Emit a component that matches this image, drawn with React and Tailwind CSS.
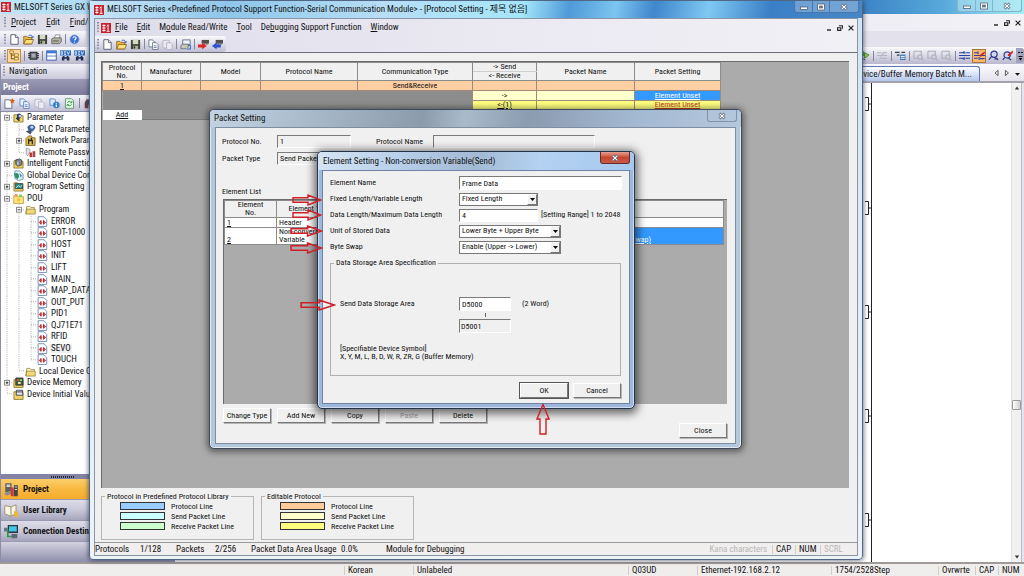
import React from "react";

/* ---------- icons ---------- */

const ICONS = {
  app: (
    <g>
      <rect width="12" height="12" fill="#c8202c" />
      <path d="M1.5 3h4M1.5 6h4M1.5 9h4M3.5 1.5v9M8.5 2v8M6.8 4l1.8-2M6.8 10h3.6" stroke="#fff" strokeWidth="1.1" fill="none" />
    </g>
  ),
  file: (
    <g>
      <path d="M2 .8h5l3 3v7.4H2z" fill="#fff" stroke="#444b5c" strokeWidth=".9" />
      <path d="M7 .8v3h3" fill="#dfe4ee" stroke="#444b5c" strokeWidth=".8" />
    </g>
  ),
  open: (
    <g>
      <path d="M.8 10.8V2.6h3.4l1 1.2h4.2v7z" fill="#f0b93a" stroke="#7a5510" strokeWidth=".8" />
      <path d="M.8 10.8L3 6h8.6l-2 4.8z" fill="#ffe07a" stroke="#7a5510" strokeWidth=".8" />
      <path d="M6 2.2c2-1.8 4-1 4.5 1.6M11.6 2.6l-1 1.6-1.5-1" stroke="#2b57b8" fill="none" strokeWidth="1" />
    </g>
  ),
  save: (
    <g>
      <path d="M1 1h10v10H1z" fill="#3d4336" />
      <rect x="3" y="1" width="6" height="4.6" fill="#d7d9c4" />
      <rect x="3.4" y="7.4" width="5.4" height="3.6" fill="#aeb09a" />
      <rect x="4" y="8" width="1.6" height="2.4" fill="#26291f" />
    </g>
  ),
  print: (
    <g>
      <path d="M3.4 5L5 1h5L8.6 5z" fill="#fff" stroke="#666" strokeWidth=".7" />
      <path d="M.8 5.4L3 4.2h8.2v4.4L9 10.6H.8z" fill="#b4b2a4" stroke="#55544c" strokeWidth=".8" />
      <path d="M2 7.6h6.4" stroke="#55544c" />
    </g>
  ),
  help: (
    <g>
      <circle cx="6" cy="6" r="5.2" fill="#3a72cc" stroke="#bcd2f4" strokeWidth=".8" />
      <path d="M4.3 4.6c.2-2.2 3.6-2 3.4 0-.1 1.2-1.6 1.2-1.6 2.6M6 8.4v1.2" stroke="#fff" fill="none" strokeWidth="1.2" />
    </g>
  ),
  tree: (
    <g>
      <path d="M2.5 3v7M2.5 5.6H6M2.5 9.6H6" stroke="#6a4a10" fill="none" />
      <rect x="1" y="1" width="4" height="2.6" fill="#ffe38a" stroke="#8a6414" strokeWidth=".7" />
      <rect x="6" y="4.2" width="4.4" height="2.6" fill="#ffe38a" stroke="#8a6414" strokeWidth=".7" />
      <rect x="6" y="8.2" width="4.4" height="2.6" fill="#ffe38a" stroke="#8a6414" strokeWidth=".7" />
    </g>
  ),
  chip: (
    <g>
      <path d="M0 4h12M0 6.2h12M0 8.4h12" stroke="#222" strokeWidth="1" />
      <rect x="2.2" y="2.4" width="7.6" height="7.6" fill="#6d7078" stroke="#1b1c20" />
      <rect x="4" y="4" width="4" height="4" fill="#a8abb4" />
    </g>
  ),
  windowBlue: (
    <g>
      <rect x=".8" y="1" width="10.4" height="10" fill="#fff" stroke="#305aa8" />
      <rect x=".8" y="1" width="10.4" height="2.6" fill="#3d78d8" />
      <path d="M1 6.6h10" stroke="#305aa8" strokeWidth=".8" />
    </g>
  ),
  dev: (
    <g>
      <rect x="0" y=".4" width="12" height="5.6" fill="#2c6cc0" />
      <path d="M1.2 1.8v3h1.4V1.8zM4.4 1.8h2.2M4.4 3.3h2M4.4 4.8h2.2M7.8 1.6l1.2 3.2 1.4-3.2" stroke="#fff" strokeWidth=".8" fill="none" />
      <path d="M2 11.4V8l1.6-1.4h1L5.4 8h1.4l.8-1.4h1L10.2 8v3.4H7.4V9.6H4.8v1.8z" fill="#1f2f55" />
    </g>
  ),
  copy: (
    <g fill="#fff" stroke="#5d6b85" strokeWidth=".9">
      <path d="M1 1h4l2 2v5.6H1z" />
      <path d="M5 4h4l2 2v5.4H5z" />
      <path d="M6.4 7.4h3M6.4 9.2h3" />
    </g>
  ),
  copyGrey: (
    <g fill="#eceaf2" stroke="#b3b1c2" strokeWidth=".9">
      <path d="M1 1.4h7v8.4H1z" />
      <path d="M5 4h4l2 2v5.4H5z" />
    </g>
  ),
  copyBlue: (
    <g fill="#e9f1ff" stroke="#5a80bd" strokeWidth=".9">
      <path d="M1 1h4l2 2v5.6H1z" />
      <path d="M5 4h4l2 2v5.4H5z" />
      <path d="M6.4 7.4h3M6.4 9.2h3" />
    </g>
  ),
  netPrint: (
    <g>
      <rect x="3" y="1" width="8" height="5" fill="#eef3fb" stroke="#56647f" strokeWidth=".9" />
      <path d="M1 7l2-1.4h6V9l-2 1.6H1z" fill="#c8c8b0" stroke="#56647f" strokeWidth=".8" />
      <path d="M9 7h2.4v4H8" stroke="#2a66b8" fill="none" />
    </g>
  ),
  moduleRed: (
    <g>
      <path d="M4 1h8v4H4z" fill="#55504e" />
      <path d="M5 5.6h6" stroke="#222" strokeDasharray="1 .8" />
      <path d="M0 6h4.6V3.8L9.6 7.6 4.6 11.2V9.2H0z" fill="#dd2a20" />
    </g>
  ),
  moduleBlue: (
    <g>
      <path d="M4 1h8v4H4z" fill="#55504e" />
      <path d="M5 5.6h6" stroke="#222" strokeDasharray="1 .8" />
      <path d="M9.6 6H5V3.8L0 7.6l5 3.6v-2h4.6z" fill="#2a4fd0" />
    </g>
  ),
  newStar: (
    <g>
      <path d="M1 2h6l1.6 1.6v7.6H1z" fill="#fff" stroke="#59627a" strokeWidth=".9" />
      <path d="M9 0l.9 1.9 2.1.4-1.5 1.5.3 2.1L9 4.9l-1.8 1 .3-2.1L6 2.3l2.1-.4z" fill="#d2601c" />
    </g>
  ),
  infoPage: (
    <g>
      <path d="M1 1h5l1 1v6H1z" fill="#dce9fb" stroke="#5a80bd" strokeWidth=".9" />
      <circle cx="8" cy="7.6" r="3.6" fill="#2f83c8" />
      <path d="M8 5.4v1M8 7.2v2.6" stroke="#fff" strokeWidth="1.3" />
    </g>
  ),
  refresh: (
    <g>
      <path d="M1.6 .8h6.6l2.2 2v8.4H1.6z" fill="#eaffea" stroke="#4d8f5c" strokeWidth=".9" />
      <path d="M3.6 5.2c1-2 3.4-1.8 4.4-.4M8.4 7c-1 2-3.4 1.8-4.4.4M8.6 3.2v2H6.8M3.4 9V7.2h1.8" stroke="#1d9838" fill="none" />
    </g>
  ),
  bino: (
    <path d="M1 11V5l2-3.4h2L6 4l1-2.4h2L11 5v6H7.4V7.4H4.6V11z" fill="#4b4a50" stroke="#b33" strokeWidth=".5" />
  ),
  param: (
    <g>
      <path d="M1 3h4l1 1h5v7H1z" fill="#f0d268" stroke="#80661c" strokeWidth=".8" />
      <path d="M4.4 2.4c2-1.6 5-.6 5 1.8L6.6 8.6 4.2 7z" fill="#34416e" />
      <circle cx="7.6" cy="4.4" r="1.4" fill="#b7d2f6" />
      <path d="M3.6 6.6l3.4 3" stroke="#1b2138" strokeWidth="1.4" />
    </g>
  ),
  plcParam: (
    <g>
      <path d="M3 3.4C4.4.4 10 .2 10.8 3.4 11 6 8.6 6.6 8 8L4 6.4z" fill="#3c66ac" stroke="#1c2e58" strokeWidth=".7" />
      <circle cx="7.6" cy="3.6" r="1.6" fill="#c7dcf7" />
      <path d="M1 8l4-1.4 2.6 2.2-2 2.6z" fill="#46506e" />
    </g>
  ),
  netParam: (
    <g>
      <path d="M1 4l3-3h3l1 2h3v8.4H1z" fill="#e0bd50" stroke="#5f4c16" strokeWidth=".8" />
      <path d="M4 4v6M4 6h4v4M7 3v3" stroke="#2e2a20" strokeWidth="1.4" fill="none" />
    </g>
  ),
  remote: (
    <g>
      <path d="M1.4 1.6c3-.6 4.6 1 4 3.6L3 9.6 1.2 8z" fill="#dfe4ec" stroke="#7a8496" strokeWidth=".7" />
      <rect x="5" y="6" width="2.6" height="5" fill="#c62f28" />
      <rect x="8.2" y="4.6" width="3" height="6.4" fill="#a3474a" />
    </g>
  ),
  intel: (
    <g>
      <path d="M1 3h4l1 1h5v7H1z" fill="#f0d268" stroke="#80661c" strokeWidth=".8" />
      <path d="M3 2l4-1 2.6 1.4v5L5.4 9 3 7z" fill="#7f848e" stroke="#2e3138" strokeWidth=".8" />
      <path d="M5.4 4v4" stroke="#e8eaf0" />
    </g>
  ),
  globe: (
    <g>
      <path d="M2 1h5.4L11 4.4V10L6 11.6 2 9z" fill="#dff0f6" stroke="#4a7f96" strokeWidth=".8" />
      <path d="M1 4c3-2 6 0 5.6 3.4L5 10 2.4 8z" fill="#2d8e6a" />
      <path d="M6.6 3l3 2.6-1 3z" fill="#3f87cb" />
    </g>
  ),
  progSet: (
    <g>
      <path d="M1 2h4l1 1h5v8H1z" fill="#f0d268" stroke="#80661c" strokeWidth=".8" />
      <rect x="2.4" y="3" width="8" height="5.4" fill="#2b8a8e" stroke="#1e3b52" strokeWidth=".8" />
      <path d="M3 7.6l3-2.6 2 1.4 2-1.6" stroke="#d6f4ef" fill="none" />
    </g>
  ),
  pou: (
    <g>
      <path d="M.8 3h4l1 1h5.6v7.4H.8z" fill="#ffe67c" stroke="#b3923a" strokeWidth=".8" />
      <rect x="2" y="1" width="3" height="3" fill="#f2955a" />
      <rect x="6.4" y="1.6" width="3.4" height="3" fill="#8ccf66" />
      <circle cx="6" cy="7.4" r="1.8" fill="#f7b93c" />
    </g>
  ),
  folder: (
    <g>
      <path d="M.8 10.6L2 2.6h3.4l1 1.2h3.8v2" fill="#fff6cf" stroke="#8f7a30" strokeWidth=".8" />
      <path d="M1 11l1-5.4h9.2V11z" fill="#f1d878" stroke="#8f7a30" strokeWidth=".8" />
    </g>
  ),
  ladder: (
    <g>
      <path d="M1.2 .8h6.4l3 3v7.6H1.2z" fill="#fff" stroke="#5f7ea8" strokeWidth=".9" />
      <path d="M2 7h1.6M8 7h1.8" stroke="#c0262c" />
      <path d="M4.4 4.6v4.8M7.2 4.6v4.8M3.2 5.6L4.6 7 3.2 8.4M8.4 5.6L7 7l1.4 1.4" stroke="#c0262c" strokeWidth="1.3" fill="none" />
    </g>
  ),
  devMem: (
    <g>
      <path d="M1 3h4l1 1h5v7.4H1z" fill="#f0d268" stroke="#80661c" strokeWidth=".8" />
      <path d="M3 1h8v8H3z" fill="#3d5a4a" stroke="#1f2722" strokeWidth=".7" />
      <rect x="4" y="2.4" width="2.4" height="2" fill="#e45a3a" />
      <rect x="7.4" y="2.4" width="2.4" height="2" fill="#8fd05a" />
      <rect x="5.4" y="5.4" width="3" height="2.2" fill="#f2e5a0" />
    </g>
  ),
  devInit: (
    <g>
      <path d="M1 3h4l1 1h5v7.4H1z" fill="#f0d268" stroke="#80661c" strokeWidth=".8" />
      <path d="M3.6 1.4h7v5.4h-7z" fill="#e8ebf2" stroke="#2d3340" strokeWidth=".9" />
      <path d="M3.6 3.2h7" stroke="#2d3340" />
    </g>
  ),
  wires: (
    <path d="M0 3h4l2-1.4M0 6h12M0 9h4l2 1.4M7 3h5M7 9h5M5.6 1.4v3M5.6 7.6v3" stroke="#27439c" strokeWidth="1.2" fill="none" />
  ),
  wiresRed: (
    <g>
      <path d="M0 3h4M0 6h12M0 9h4M6.6 9.4h5M5.6 7.6v3.4M4.4 1.6v3" stroke="#27439c" strokeWidth="1.2" fill="none" />
      <path d="M11.4 1.6L6 5.6l.4 1.4 1.6.2 4-4z" fill="#d0241c" />
    </g>
  ),
  lens: (
    <g fill="none" stroke="#2d3a86" strokeWidth="1.3">
      <circle cx="6.6" cy="4.6" r="3.4" fill="#cfd9f2" />
      <path d="M4 7L1 10.6M8 8l3 3M7 9.6h4" />
    </g>
  ),
  lensRed: (
    <g fill="none" stroke="#2d3a86" strokeWidth="1.3">
      <circle cx="5.6" cy="5.4" r="3.4" fill="#cfd9f2" />
      <path d="M3 8L.8 10.8M7 9l3 2" />
      <path d="M11.6.6L6 5.4l.6 1.2 1.4.2L12 2.6z" fill="#d0241c" stroke="none" />
    </g>
  ),
  stepGrey: (
    <path d="M0 3h5M7 3h4M0 6h4M6 6h5M3 9h8M8 2L4 7" stroke="#b3b3c0" strokeWidth="1.2" fill="none" />
  ),
  step: (
    <g>
      <path d="M0 2.6h5M7 2.6h4M2 5.6h3" stroke="#3b3d49" strokeWidth="1.2" />
      <rect x="5.6" y="5" width="5.8" height="6" fill="#4677b8" />
      <path d="M6.4 7h4.2M6.4 9h4.2" stroke="#fff" />
    </g>
  ),
  searchGrey: (
    <g fill="none" stroke="#aeaebb" strokeWidth="1.2">
      <path d="M1 1.4h8v5M1 1.4V9h4" />
      <circle cx="7.6" cy="7.6" r="2.4" />
      <path d="M9.4 9.4l2 2" />
    </g>
  ),
  goGreen: (
    <g>
      <circle cx="3.4" cy="4" r="3" fill="#3fa53a" />
      <path d="M6 3l5 2.4L6 9z" fill="#9ccf3e" stroke="#39702b" strokeWidth=".8" />
      <path d="M2 8l5 3" stroke="#555" />
    </g>
  ),
  barProject: (
    <g>
      <path d="M1 1h5v7H1z" fill="#5b6068" />
      <path d="M2 2h3v2H2z" fill="#cdd4de" />
      <path d="M0 9l5-2 2 2-5 2z" fill="#888d96" />
      <rect x="5.4" y="4.4" width="2.4" height="7" fill="#d0392c" />
      <rect x="8" y="2.6" width="3" height="8.8" fill="#42464e" />
      <path d="M8.6 4h1.8M8.6 6h1.8" stroke="#cfd3da" strokeWidth=".8" />
    </g>
  ),
  barLibrary: (
    <g>
      <path d="M.6 2l5 1.2 4-1.8v7L5.4 10.6.6 8.6z" fill="#fbf6e6" stroke="#9c8c68" strokeWidth=".7" />
      <path d="M5.6 3.2v7.2" stroke="#9c8c68" strokeWidth=".8" />
      <path d="M8 6.4l3 .6.4 4.4-3.4-.4z" fill="#e8b83a" />
    </g>
  ),
  barConnect: (
    <g>
      <rect x="3" y=".8" width="8.2" height="6.4" fill="#2b3540" />
      <rect x="4" y="1.8" width="6.2" height="4.2" fill="#43c4e8" />
      <path d="M1 5h2v5h3" stroke="#2a9a4a" strokeWidth="1.3" fill="none" />
      <rect x="6" y="8" width="4.6" height="3.4" fill="#5c6876" />
      <rect x="0" y="3" width="3" height="3" fill="#6a7480" />
    </g>
  ),
};

function Icon({ name, className = "size-[11px]" }) {
  return (
    <svg viewBox="0 0 12 12" className={`${className} shrink-0`} aria-hidden="true">
      {ICONS[name]}
    </svg>
  );
}

/* ---------- shared pieces ---------- */

function Grip() {
  return (
    <svg viewBox="0 0 2 11" className="h-[11px] w-[2px] shrink-0" aria-hidden="true">
      <path d="M1 0v11" stroke="#6f6f88" strokeWidth="1.4" strokeDasharray="1.4 1.4" />
    </svg>
  );
}

function Separator() {
  return <span className="h-[10px] w-px shrink-0 bg-[#85859c]" />;
}

function Tools({ items, className }) {
  return (
    <div role="toolbar" className={`flex items-center ${className}`}>
      <Grip />
      {items.map((name, i) =>
        name === "|" ? (
          <Separator key={i} />
        ) : (
          <button key={i} type="button" aria-label={name} className="flex shrink-0 items-center">
            <Icon name={name} />
          </button>
        )
      )}
    </div>
  );
}

function MenuItem({ text, hot = 0 }) {
  return (
    <button type="button" className="whitespace-nowrap">
      {text.slice(0, hot)}
      <u>{text[hot]}</u>
      {text.slice(hot + 1)}
    </button>
  );
}

function MdiButtons() {
  return (
    <div className="flex items-center gap-[5px]">
      <button type="button" aria-label="Minimize document" className="size-[6px]">
        <svg viewBox="0 0 6 6" className="size-[6px]"><path d="M1 5h4" stroke="#222" strokeWidth="1.4" /></svg>
      </button>
      <button type="button" aria-label="Restore document" className="size-[6px]">
        <svg viewBox="0 0 6 6" className="size-[6px]">
          <path d="M2 .8h3.4v3M.6 2.8h3.2v2.6H.6z" stroke="#222" fill="none" strokeWidth="1.1" />
        </svg>
      </button>
      <button type="button" aria-label="Close document" className="size-[6px]">
        <svg viewBox="0 0 6 6" className="size-[6px]"><path d="M.6.6l4.8 4.8M5.4.6L.6 5.4" stroke="#222" strokeWidth="1.2" /></svg>
      </button>
    </div>
  );
}

function CaptionButtons({ className }) {
  return (
    <div className={`flex h-[12px] self-start rounded-b-[3px] border border-t-0 ${className}`}>
      <button type="button" aria-label="Minimize" className="flex w-[18px] items-center justify-center border-r border-inherit">
        <svg viewBox="0 0 8 8" className="size-[8px]"><rect x=".5" y="4" width="7" height="2.4" fill="#fff" stroke="#555f75" strokeWidth=".8" /></svg>
      </button>
      <button type="button" aria-label="Maximize" className="flex w-[17px] items-center justify-center border-r border-inherit">
        <svg viewBox="0 0 8 8" className="size-[8px]">
          <rect x=".6" y="1" width="6.8" height="6" fill="#fff" stroke="#555f75" strokeWidth=".8" />
          <rect x="2.6" y="3" width="2.8" height="2" fill="#6d86ad" stroke="#555f75" strokeWidth=".7" />
        </svg>
      </button>
      <button type="button" aria-label="Close" className="flex w-[28px] items-center justify-center">
        <CloseGlyph />
      </button>
    </div>
  );
}

function CloseGlyph() {
  return (
    <svg viewBox="0 0 8 8" className="size-[8px]">
      <path d="M1.4 1.4l5.2 5.2M6.6 1.4L1.4 6.6" stroke="#4c566b" strokeWidth="2.6" />
      <path d="M1.6 1.6l4.8 4.8M6.4 1.6L1.6 6.4" stroke="#fff" strokeWidth="1.3" />
    </svg>
  );
}

/* ---------- background application ---------- */

const TREE = [
  ["Parameter", 0, "param", "-"],
  ["PLC Parameter", 1, "plcParam"],
  ["Network Parameter", 1, "netParam", "+"],
  ["Remote Password", 1, "remote", "", true],
  ["Intelligent Function Module", 0, "intel", "+"],
  ["Global Device Comment", 0, "globe"],
  ["Program Setting", 0, "progSet", "+"],
  ["POU", 0, "pou", "-"],
  ["Program", 1, "folder", "-"],
  ["ERROR", 2, "ladder"],
  ["GOT-1000", 2, "ladder"],
  ["HOST", 2, "ladder"],
  ["INIT", 2, "ladder"],
  ["LIFT", 2, "ladder"],
  ["MAIN_", 2, "ladder"],
  ["MAP_DATA", 2, "ladder"],
  ["OUT_PUT", 2, "ladder"],
  ["PID1", 2, "ladder"],
  ["QJ71E71", 2, "ladder"],
  ["RFID", 2, "ladder"],
  ["SEVO", 2, "ladder"],
  ["TOUCH", 2, "ladder", "", true],
  ["Local Device Comment", 1, "folder", "", true],
  ["Device Memory", 0, "devMem", "+"],
  ["Device Initial Value", 0, "devInit", "", true],
];

function TreeRow({ row }) {
  const [label, level, icon, box, last] = row;
  return (
    <li className="flex items-center whitespace-nowrap">
      {Array.from({ length: level }, (_, i) => (
        <svg key={i} viewBox="0 0 12 12" preserveAspectRatio="none" className="h-full w-[12px] shrink-0">
          <path d="M6 0v12" stroke="#b4b4b4" strokeDasharray="1 1" />
        </svg>
      ))}
      <svg viewBox="0 0 12 12" preserveAspectRatio="none" className="h-full w-[12px] shrink-0">
        <path d={last ? "M6 0v6h6" : "M6 0v12M6 6h6"} stroke="#b4b4b4" fill="none" strokeDasharray="1 1" />
        {box && <rect x="3.5" y="3.5" width="5" height="5" fill="#fff" stroke="#8a8a8a" />}
        {box && <path d={box === "+" ? "M4.6 6h2.8M6 4.6v2.8" : "M4.6 6h2.8"} stroke="#222" strokeWidth=".9" />}
      </svg>
      <Icon name={icon} />
      <span className={label === "SEVO" ? "ml-[2px] bg-[#efefef] px-px" : "ml-[2px] px-px"}>{label}</span>
    </li>
  );
}

function Navigation() {
  return (
    <aside className="flex w-[175px] shrink-0 flex-col border-l border-[#8d8ca6] bg-[#dcdbe8]">
      <div className="flex h-[15px] items-center gap-[4px] bg-linear-to-b from-[#f2f2f8] to-[#c9c8da] pl-[2px] text-[9px]">
        <Grip />
        Navigation
      </div>
      <h2 className="flex h-[16px] items-center bg-linear-to-b from-[#9b9ab5] to-[#7d7b9b] pl-[2px] text-[9px] font-bold text-white">
        Project
      </h2>
      <div className="flex h-[16px] items-center gap-[4px] bg-linear-to-b from-[#f4f4fa] to-[#c0bfd4] pl-[3px]">
        {["newStar", "copyBlue", "copyGrey", "infoPage", "refresh"].map((n) => (
          <button key={n} type="button" aria-label={n} className="flex">
            <Icon name={n} />
          </button>
        ))}
        <Separator />
        <button type="button" aria-label="find" className="flex">
          <Icon name="bino" />
        </button>
      </div>
      <div className="flex-1 overflow-hidden border-t border-[#8d8ca6] bg-white">
        <ul className="grid h-[288px] auto-rows-fr text-[9px] leading-none">
          {TREE.map((row) => (
            <TreeRow key={row[0]} row={row} />
          ))}
        </ul>
      </div>
      <div className="flex h-[5px] shrink-0 items-center bg-[#8583a3] pl-[50px]">
        <svg viewBox="0 0 24 2" className="h-[2px] w-[24px]"><path d="M0 1h24" stroke="#26263a" strokeWidth="2" strokeDasharray="1 1" /></svg>
      </div>
      <NavBar icon="barProject" text="Project" active />
      <NavBar icon="barLibrary" text="User Library" />
      <NavBar icon="barConnect" text="Connection Destination" />
      <div className="h-[20px] shrink-0 bg-linear-to-b from-[#d4d3e2] to-[#8f8eaa]" />
    </aside>
  );
}

function NavBar({ icon, text, active }) {
  return (
    <button
      type="button"
      className={
        active
          ? "flex h-[21px] shrink-0 items-center gap-[4px] border-b border-[#9a99b3] bg-linear-to-b from-[#fbcf6b] via-[#f8b93f] to-[#f5ac2c] pl-[3px] text-[9px] font-bold whitespace-nowrap"
          : "flex h-[21px] shrink-0 items-center gap-[4px] border-b border-[#9a99b3] bg-linear-to-b from-[#dddce8] via-[#c9c8d9] to-[#a5a4bb] pl-[3px] text-[9px] font-bold whitespace-nowrap"
      }
    >
      <Icon name={icon} className="size-[15px]" />
      {text}
    </button>
  );
}

const RIGHT_TOOLS = ["goGreen", "|", "stepGrey", "|", "step", "|", "searchGrey", "searchGrey", "searchGrey", "|", "wires"];

function Bracket() {
  return (
    <svg viewBox="0 0 6 14" className="h-[14px] w-[6px]">
      <path d="M0 .5h3.5v13H0M3.5 7H6" stroke="#222" fill="none" />
    </svg>
  );
}

function Workspace() {
  return (
    <section className="flex min-w-0 flex-1 flex-col bg-[#f0eff5]">
      <div className="flex h-[17px] items-end bg-linear-to-b from-[#fafafd] to-[#e4e3ec]">
        <div className="ml-auto flex h-[15px] w-[145px] items-center justify-end rounded-tr-[3px] border border-[#5c76b4] border-b-0 bg-linear-to-b from-white to-[#b4c6ec] pr-[7px] text-[9px] whitespace-nowrap">
          Device/Buffer Memory Batch M...
        </div>
        <div className="flex w-[44px] items-center justify-between self-center pr-[4px] pl-[14px]">
          <svg viewBox="0 0 26 8" className="h-[8px] w-[26px]" aria-hidden="true">
            <path d="M4 1.4L1 4l3 2.6zM11.4 1.4l3 2.6-3 2.6z" fill="#fff" stroke="#333" strokeWidth=".8" />
            <path d="M21 4h5l-2.500 2.800z" fill="#111" />
          </svg>
        </div>
      </div>
      <div className="flex flex-1 border-t-2 border-[#a3a2ad] bg-white">
        <div className="flex flex-1 flex-col items-end gap-[90px] overflow-hidden pt-[14px]">
          <Bracket />
          <Bracket />
          <Bracket />
          <Bracket />
          <Bracket />
        </div>
        <div className="w-[140px] border-l border-[#222]" />
        <div className="flex w-[10px] flex-col items-center justify-between border-l border-[#e2e2e2] bg-[#f1f1f1] py-[3px]">
          <svg viewBox="0 0 6 4" className="h-[4px] w-[6px]"><path d="M3 .6l2.200 2.800H.8z" fill="#333" /></svg>
          <span className="mt-[310px] mb-auto h-[10px] w-[9px] rounded-[1px] border border-[#9a9a9a] bg-linear-to-r from-white to-[#cfcfcf]" />
          <svg viewBox="0 0 6 4" className="h-[4px] w-[6px]"><path d="M3 3.400L.8.6h4.400z" fill="#333" /></svg>
        </div>
        <div className="w-[3px] border-l border-[#bbb] bg-[#e6e5ee]" />
      </div>
    </section>
  );
}

function StatusCell({ className, children }) {
  return <span className={`shrink-0 border-l border-[#cfcccc] pl-[3px] whitespace-nowrap ${className}`}>{children}</span>;
}

function MainApp() {
  return (
    <div className="flex h-screen flex-col bg-[#e3e2ec]">
      <header className="flex h-[14px] items-center bg-linear-to-r from-[#bfe6f7] via-[#5f9fd6] to-[#3f86c9] pl-px text-[9px]">
        <Icon name="app" className="size-[10px]" />
        <h1 className="ml-[3px] whitespace-nowrap">MELSOFT Series GX Works2</h1>
        <div className="ml-auto flex h-full w-[161px] justify-end bg-linear-to-r from-[#3c84c6] via-[#58a9da] to-[#a5eef4] pr-[2px]">
          <CaptionButtons className="border-[#7fb5cf] bg-[#bfeaf4]/50" />
        </div>
      </header>
      <div className="flex h-[17px] items-center bg-linear-to-r from-[#dcdbe8] to-[#f2f1f6] pr-[3px] pl-[4px] text-[9px]">
        <Grip />
        <nav className="ml-[5px] flex gap-[10px]">
          <MenuItem text="Project" />
          <MenuItem text="Edit" />
          <MenuItem text="Find/Replace" />
        </nav>
        <div className="ml-auto">
          <MdiButtons />
        </div>
      </div>
      <Tools items={["file", "open", "save", "print", "|", "help"]} className="h-[16px] w-[86px] gap-[3px] bg-linear-to-b from-[#f7f7fb] to-[#cfcee0] pl-[4px]" />
      <div className="flex h-[17px] items-center bg-linear-to-b from-[#fbfbfd] to-[#b9b8ce]">
        <div className="flex flex-1 items-center gap-[3px] overflow-hidden pl-[4px]">
          <Grip />
          <button type="button" aria-label="Project tree" aria-pressed="true" className="-ml-[2px] flex size-[14px] shrink-0 items-center justify-center border border-[#c98c4a] bg-[#fdd9a0]">
            <Icon name="tree" />
          </button>
          <Separator />
          <button type="button" aria-label="Module" className="flex"><Icon name="chip" /></button>
          <Separator />
          <button type="button" aria-label="Output" className="flex"><Icon name="windowBlue" /></button>
          <button type="button" aria-label="Device search" className="flex"><Icon name="dev" /></button>
          <button type="button" aria-label="Device list" className="flex"><Icon name="dev" /></button>
        </div>
        <div className="flex items-center gap-[3px]">
          {RIGHT_TOOLS.map((n, i) =>
            n === "|" ? (
              <Separator key={i} />
            ) : (
              <button key={i} type="button" aria-label={n} className="flex"><Icon name={n} /></button>
            )
          )}
          <button type="button" aria-label="Write mode" aria-pressed="true" className="-mx-px flex size-[14px] items-center justify-center border border-[#a8763c] bg-[#fbb873]">
            <Icon name="wiresRed" />
          </button>
          <button type="button" aria-label="Monitor" className="flex"><Icon name="lens" /></button>
          <button type="button" aria-label="Monitor write" className="flex"><Icon name="lensRed" /></button>
          <button type="button" aria-label="More buttons" className="flex h-[15px] w-[8px] items-center justify-center rounded-r-[3px] bg-[#a3a2bb]">
            <svg viewBox="0 0 5 10" className="h-[10px] w-[5px]"><path d="M0 1.500h2M3 1.500h2M.5 5.500h4" stroke="#111" /><path d="M.5 7h4L2.500 9.400z" fill="#111" /></svg>
          </button>
        </div>
      </div>
      <div className="flex min-h-0 flex-1">
        <Navigation />
        <Workspace />
      </div>
      <footer className="flex h-[14px] items-center justify-end border-t-2 border-[#a09a98] bg-[#f0eded] text-[9px]">
        <StatusCell className="w-[69px]">Korean</StatusCell>
        <StatusCell className="w-[215px]">Unlabeled</StatusCell>
        <StatusCell className="w-[69px]">Q03UD</StatusCell>
        <StatusCell className="w-[134px]">Ethernet-192.168.2.12</StatusCell>
        <StatusCell className="w-[107px]">1754/2528Step</StatusCell>
        <StatusCell className="w-[37px]">Ovrwrte</StatusCell>
        <StatusCell className="w-[23px]">CAP</StatusCell>
        <StatusCell className="w-[26px]">NUM</StatusCell>
      </footer>
    </div>
  );
}

/* ---------- protocol setting window ---------- */

function ProtocolTable() {
  const th = "border border-[#8b8b8b] bg-[#f0f0f0] p-0 font-normal";
  const td = "border border-[#a08a7a] p-0";
  return (
    <table className="w-[618px] table-fixed border-collapse text-center text-[8px] leading-[8px]">
      <colgroup>
        <col className="w-[39px]" />
        <col className="w-[59px]" />
        <col className="w-[60px]" />
        <col className="w-[97px]" />
        <col className="w-[115px]" />
        <col className="w-[64px]" />
        <col className="w-[98px]" />
        <col className="w-[86px]" />
      </colgroup>
      <thead>
        <tr className="h-[9px]">
          <th rowSpan={2} className={th}>Protocol<br />No.</th>
          <th rowSpan={2} className={th}>Manufacturer</th>
          <th rowSpan={2} className={th}>Model</th>
          <th rowSpan={2} className={th}>Protocol Name</th>
          <th rowSpan={2} className={th}>Communication Type</th>
          <th className="border border-[#8b8b8b] border-b-[#cfcfcf] bg-[#f0f0f0] p-0 font-normal">-&gt; Send</th>
          <th rowSpan={2} className={th}>Packet Name</th>
          <th rowSpan={2} className={th}>Packet Setting</th>
        </tr>
        <tr className="h-[9px]">
          <th className="border border-[#8b8b8b] border-t-[#cfcfcf] bg-[#f0f0f0] p-0 font-normal">&lt;- Receive</th>
        </tr>
      </thead>
      <tbody>
        <tr className="h-[10px] bg-[#ffcfa4]">
          <td className={td}><a href="#protocol-1" className="underline">1</a></td>
          <td className={td} />
          <td className={td} />
          <td className={td} />
          <td className={td}>Send&amp;Receive</td>
          <td className={td} />
          <td className={td} />
          <td className={td} />
        </tr>
        <tr className="h-[10px] bg-[#ffffcc]">
          <td colSpan={5} className="bg-[#8c8c8c] p-0" />
          <td className={td}>-&gt;</td>
          <td className={td} />
          <td className="border border-[#a08a7a] bg-[#3399ff] p-0 text-white"><a href="#send" className="underline">Element Unset</a></td>
        </tr>
        <tr className="h-[9px] bg-[#ffff80]">
          <td colSpan={5} className="bg-[#8c8c8c] p-0" />
          <td className={td}><a href="#receive-1" className="underline">&lt;-(1)</a></td>
          <td className={td} />
          <td className="border border-[#a08a7a] p-0 text-[#c83c10]"><a href="#receive" className="underline">Element Unset</a></td>
        </tr>
        <tr className="h-[10px]">
          <td className="bg-white p-0"><a href="#add" className="underline">Add</a></td>
          <td colSpan={7} className="border-b border-[#777] bg-[#8c8c8c] p-0" />
        </tr>
      </tbody>
    </table>
  );
}

function Legend({ title, rows }) {
  return (
    <fieldset className="h-[48px] w-[153px] border border-[#b5b5b5] pl-[18px] text-[8px] leading-[9px]">
      <legend className="-ml-[15px] px-[2px]">{title}</legend>
      <ul className="flex flex-col">
        {rows.map(([label, color]) => (
          <li key={label} className="flex h-[10px] items-center gap-[6px]">
            <span className={`h-[8px] w-[45px] border border-[#333] ${color}`} />
            {label}
          </li>
        ))}
      </ul>
    </fieldset>
  );
}

function ProtocolWindow() {
  return (
    <section
      aria-label="Predefined Protocol Support Function"
      className="absolute top-0 right-[161px] bottom-[16px] left-[89px] flex flex-col rounded-[4px] border border-[#4f6784] bg-linear-to-b from-[#cfe4f5] to-[#edf3f8] px-[4px] pb-[3px] shadow-[0_0_4px_1px_rgba(40,50,70,0.6)]"
    >
      <header className="-mx-[4px] flex h-[17px] items-center bg-[linear-gradient(100deg,#c9e6f8_0%,#8ec6ea_18%,#b7def5_38%,#a5e6fa_56%,#4f9ad8_62%,#7cc4f0_68%,#3f86cc_73%,#7fc8f2_80%,#3a7fc6_88%,#4787c6_100%)] pl-[4px] text-[9px]">
        <Icon name="app" className="size-[10px]" />
        <h2 className="ml-[3px] whitespace-nowrap">
          MELSOFT Series &lt;Predefined Protocol Support Function-Serial Communication Module&gt; - [Protocol Setting - 제목 없음]
        </h2>
        <div className="mr-[3px] ml-auto flex self-start">
          <CaptionButtons className="border-[#4a76ab] bg-white/25" />
        </div>
      </header>
      <div className="flex min-h-0 flex-1 flex-col border border-[#8a96a6] bg-[#f0f0f0]">
        <div className="border-b border-[#6e6e78] bg-linear-to-r from-[#dddcea] via-[#eae9f2] to-[#f1f0f5]">
          <div className="flex h-[17px] items-center pr-[3px] pl-[2px] text-[9px]">
            <Grip />
            <span className="ml-[2px] flex"><Icon name="app" className="size-[10px]" /></span>
            <nav className="ml-[4px] flex gap-[9px]">
              <MenuItem text="File" />
              <MenuItem text="Edit" />
              <MenuItem text="Module Read/Write" hot={1} />
              <MenuItem text="Tool" />
              <MenuItem text="Debugging Support Function" hot={2} />
              <MenuItem text="Window" />
            </nav>
            <div className="ml-auto"><MdiButtons /></div>
          </div>
          <Tools
            items={["file", "open", "save", "|", "copy", "copyGrey", "|", "netPrint", "|", "moduleRed", "moduleBlue"]}
            className="h-[16px] w-[131px] gap-[3px] rounded-r-[3px] bg-linear-to-b from-[#f9f9fc] to-[#bfbed4] pl-[2px]"
          />
        </div>
        <div className="flex min-h-0 flex-1 flex-col px-[6px] pt-[8px]">
          <div className="mr-[2px] min-h-0 flex-1 overflow-hidden border-t border-l border-[#6b6b6b] bg-[#ababab]">
            <ProtocolTable />
          </div>
          <div className="flex gap-[7px] pt-[4px] pb-[2px]">
            <Legend
              title="Protocol in Predefined Protocol Library"
              rows={[["Protocol Line", "bg-[#99ccff]"], ["Send Packet Line", "bg-[#ccffff]"], ["Receive Packet Line", "bg-[#ccffcc]"]]}
            />
            <Legend
              title="Editable Protocol"
              rows={[["Protocol Line", "bg-[#ffcc99]"], ["Send Packet Line", "bg-[#ffffcc]"], ["Receive Packet Line", "bg-[#ffff80]"]]}
            />
          </div>
        </div>
        <footer className="flex h-[13px] items-center border-t border-[#9a9a9a] bg-[#f1eeee] text-[9px]">
          <span className="w-[45px]">Protocols</span>
          <span className="w-[36px]">1/128</span>
          <span className="w-[39px]">Packets</span>
          <span className="w-[36px]">2/256</span>
          <span className="w-[90px]">Packet Data Area Usage</span>
          <span className="w-[45px]">0.0%</span>
          <span>Module for Debugging</span>
          <span className="ml-auto pr-[5px] text-[#b8b8b8]">Kana characters</span>
          <StatusCell className="w-[23px]">CAP</StatusCell>
          <StatusCell className="w-[25px]">NUM</StatusCell>
          <StatusCell className="w-[37px] text-[#b8b8b8]">SCRL</StatusCell>
        </footer>
      </div>
    </section>
  );
}

/* ---------- dialogs ---------- */

const FIELD = "border border-t-[#7a7a7a] border-l-[#7a7a7a] border-r-white border-b-white px-[2px]";

function DialogButton({ children, className = "", ...rest }) {
  return (
    <button
      type="button"
      className={`h-[15px] w-[48px] border border-t-white border-l-white border-r-[#777] border-b-[#777] bg-[#f0f0f0] shadow-[1px_1px_0_#b5b5b5] disabled:text-[#a5a5a5] ${className}`}
      {...rest}
    >
      {children}
    </button>
  );
}

function PacketDialog() {
  const th = "border border-[#8b8b8b] bg-[#f0f0f0] p-0 font-normal";
  const td = "border border-[#8b8b8b] bg-white px-[2px] py-0 align-bottom";
  return (
    <section
      role="dialog"
      aria-label="Packet Setting"
      className="absolute top-[109px] left-[209px] w-[533px] rounded-[5px] border border-[#3c4a5c] bg-[#b4c8dc] px-[5px] pb-[4px] shadow-[0_1px_6px_2px_rgba(0,0,0,0.45)] ring-1 ring-white/60 ring-inset"
    >
      <header className="-mx-[5px] flex h-[17px] items-center rounded-t-[4px] bg-[linear-gradient(100deg,#c3d3e2_0%,#aebfd0_15%,#8c9bac_40%,#a9bacb_48%,#8b9bb0_60%,#a3b9d2_80%,#b5c8dc_100%)] pl-[4px] text-[9px]">
        <h2>Packet Setting</h2>
        <button type="button" aria-label="Close Packet Setting" className="mr-[4px] ml-auto flex h-[12px] w-[30px] items-center justify-center self-start rounded-b-[3px] border border-t-0 border-[#8093aa]">
          <CloseGlyph />
        </button>
      </header>
      <div className="border border-[#7d8ea3] bg-[#f0f0f0] px-[6px] pb-[5px] text-[8px] leading-[8px]">
        <div className="grid grid-cols-[55px_74px_25px_57px_162px] items-center pt-[7px]">
          <label htmlFor="pno">Protocol No.</label>
          <input id="pno" readOnly defaultValue="1" className={`h-[13px] w-full bg-[#f0f0f0] ${FIELD}`} />
          <span />
          <label htmlFor="pname">Protocol Name</label>
          <input id="pname" readOnly className={`h-[13px] w-full bg-[#f0f0f0] ${FIELD}`} />
        </div>
        <div className="grid grid-cols-[55px_162px] items-center pt-[4px]">
          <label htmlFor="ptype">Packet Type</label>
          <input id="ptype" readOnly defaultValue="Send Packet" className={`h-[13px] w-full bg-[#f0f0f0] ${FIELD}`} />
        </div>
        <h3 className="pt-[23px] pb-[3px]">Element List</h3>
        <div className="mr-[2px] ml-px h-[205px] border-t border-l border-[#6b6b6b] bg-[#ababab]">
          <table className="w-[500px] table-fixed border-collapse">
            <colgroup>
              <col className="w-[52px]" />
              <col className="w-[66px]" />
              <col />
            </colgroup>
            <thead>
              <tr className="h-[17px]">
                <th className={th}>Element<br />No.</th>
                <th className={th}>Element Type</th>
                <th className={th} />
              </tr>
            </thead>
            <tbody>
              <tr className="h-[10px]">
                <td className={td}><a href="#element-1" className="underline">1</a></td>
                <td className={td}>Header</td>
                <td className={td} />
              </tr>
              <tr className="h-[17px]">
                <td className={td}><a href="#element-2" className="underline">2</a></td>
                <td className={td}>Non-conversion<br />Variable</td>
                <td className="border border-[#8b8b8b] bg-[#3399ff] py-0 pr-[72px] pl-[2px] text-right align-bottom text-white">
                  <a href="#swap" className="underline">(Swap)</a>
                </td>
              </tr>
            </tbody>
          </table>
        </div>
        <div className="flex gap-[6px] pt-[4px]">
          <DialogButton className="ml-px">Change Type</DialogButton>
          <DialogButton>Add New</DialogButton>
          <DialogButton>Copy</DialogButton>
          <DialogButton disabled>Paste</DialogButton>
          <DialogButton>Delete</DialogButton>
        </div>
        <div className="flex justify-end pr-[2px]">
          <DialogButton>Close</DialogButton>
        </div>
      </div>
    </section>
  );
}

function Select({ id, value, width }) {
  return (
    <span className={`relative flex h-[13px] ${width}`}>
      <select id={id} defaultValue={value} className="w-full appearance-none border border-[#777] bg-white pr-[12px] pl-[2px]">
        <option>{value}</option>
      </select>
      <span className="pointer-events-none absolute inset-y-px right-px flex w-[10px] items-center justify-center border border-t-white border-l-white border-r-[#777] border-b-[#777] bg-[#f0f0f0]">
        <svg viewBox="0 0 5 3" className="h-[3px] w-[5px]"><path d="M0 0h5L2.500 3z" fill="#000" /></svg>
      </span>
    </span>
  );
}

function ElementDialog() {
  return (
    <section
      role="dialog"
      aria-label="Element Setting"
      className="absolute top-[151px] left-[317px] w-[318px] rounded-[5px] border border-[#26344a] bg-[#9db8dc] px-[4px] pb-[4px] shadow-[0_2px_8px_3px_rgba(0,0,0,0.55)] ring-1 ring-white/50 ring-inset"
    >
      <header className="-mx-[4px] flex h-[18px] items-center rounded-t-[4px] bg-[linear-gradient(100deg,#d5e4f3_0%,#b9d0ea_25%,#a3b9d3_50%,#b4d2f2_70%,#a6c8ee_100%)] pl-[5px] text-[9px]">
        <h2>Element Setting - Non-conversion Variable(Send)</h2>
        <button type="button" aria-label="Close Element Setting" className="mr-[4px] ml-auto flex h-[12px] w-[30px] items-center justify-center self-start rounded-b-[3px] border border-t-0 border-[#6b2a2a] bg-linear-to-b from-[#e3a091] via-[#c9452f] to-[#c65a48]">
          <CloseGlyph />
        </button>
      </header>
      <div className="border border-[#6d83a5] bg-[#f0f0f0] px-[7px] pt-[4px] pb-[5px] text-[8px] leading-[8px]">
        <div className="grid auto-rows-[16px] grid-cols-[129px_1fr] items-center">
          <label htmlFor="ename">Element Name</label>
          <input id="ename" defaultValue="Frame Data" className={`h-[14px] w-full bg-white ${FIELD}`} />
          <label htmlFor="flen">Fixed Length/Variable Length</label>
          <Select id="flen" value="Fixed Length" width="w-[79px]" />
          <label htmlFor="dlen">Data Length/Maximum Data Length</label>
          <span className="flex items-center gap-[3px]">
            <input id="dlen" defaultValue="4" className={`h-[13px] w-[79px] bg-white ${FIELD}`} />
            [Setting Range] 1 to 2048
          </span>
          <label htmlFor="unit">Unit of Stored Data</label>
          <Select id="unit" value="Lower Byte + Upper Byte" width="w-[102px]" />
          <label htmlFor="swap">Byte Swap</label>
          <Select id="swap" value="Enable (Upper -> Lower)" width="w-[102px]" />
        </div>
        <fieldset className="mt-[4px] h-[117px] w-[291px] border border-[#b0b0b0] pl-[9px]">
          <legend className="-ml-[6px] px-[2px]">Data Storage Area Specification</legend>
          <div className="grid grid-cols-[119px_63px_1fr] items-center pt-[30px]">
            <label htmlFor="area">Send Data Storage Area</label>
            <input id="area" defaultValue="D5000" className={`h-[14px] w-[52px] bg-white ${FIELD}`} />
            <span>(2 Word)</span>
            <span className="col-start-2 my-[2px] ml-[26px] h-[4px] w-px bg-[#666]" />
            <input aria-label="End of storage area" readOnly defaultValue="D5001" className="col-start-2 h-[14px] w-[52px] border border-t-[#7a7a7a] border-l-[#7a7a7a] border-r-white border-b-white bg-[#f0f0f0] px-px" />
          </div>
          <p className="pt-[12px]">
            [Specifiable Device Symbol]
            <br />
            X, Y, M, L, B, D, W, R, ZR, G (Buffer Memory)
          </p>
        </fieldset>
        <div className="flex justify-end gap-[5px] pt-[7px] pr-px">
          <DialogButton className="outline outline-[#555]">OK</DialogButton>
          <DialogButton>Cancel</DialogButton>
        </div>
      </div>
    </section>
  );
}

/* ---------- red callouts ---------- */

function Arrow({ className }) {
  return (
    <svg viewBox="0 0 30 12" preserveAspectRatio="none" className={`pointer-events-none absolute ${className}`} aria-hidden="true">
      <path d="M1 3.800h15V1l12.600 5L16 11V8.200H1z" fill="none" stroke="#cf2027" strokeWidth="1.400" />
    </svg>
  );
}

export default function App() {
  return (
    <div className="relative min-h-screen overflow-hidden font-['Roboto_Condensed','Noto_Sans_CJK_KR',sans-serif] leading-none text-[#111]">
      <MainApp />
      <ProtocolWindow />
      <PacketDialog />
      <ElementDialog />
      <Arrow className="top-[194px] left-[292px] h-[12px] w-[30px]" />
      <Arrow className="top-[209px] left-[292px] h-[12px] w-[30px]" />
      <Arrow className="top-[225px] left-[290px] h-[12px] w-[33px]" />
      <Arrow className="top-[242px] left-[290px] h-[12px] w-[33px]" />
      <Arrow className="top-[299px] left-[300px] h-[12px] w-[36px]" />
      <svg viewBox="0 0 14 32" className="pointer-events-none absolute top-[403px] left-[536px] h-[32px] w-[14px]" aria-hidden="true">
        <path d="M4 31V16H1L7 1.500 13 16h-3v15z" fill="none" stroke="#cf2027" strokeWidth="1.400" />
      </svg>
    </div>
  );
}
